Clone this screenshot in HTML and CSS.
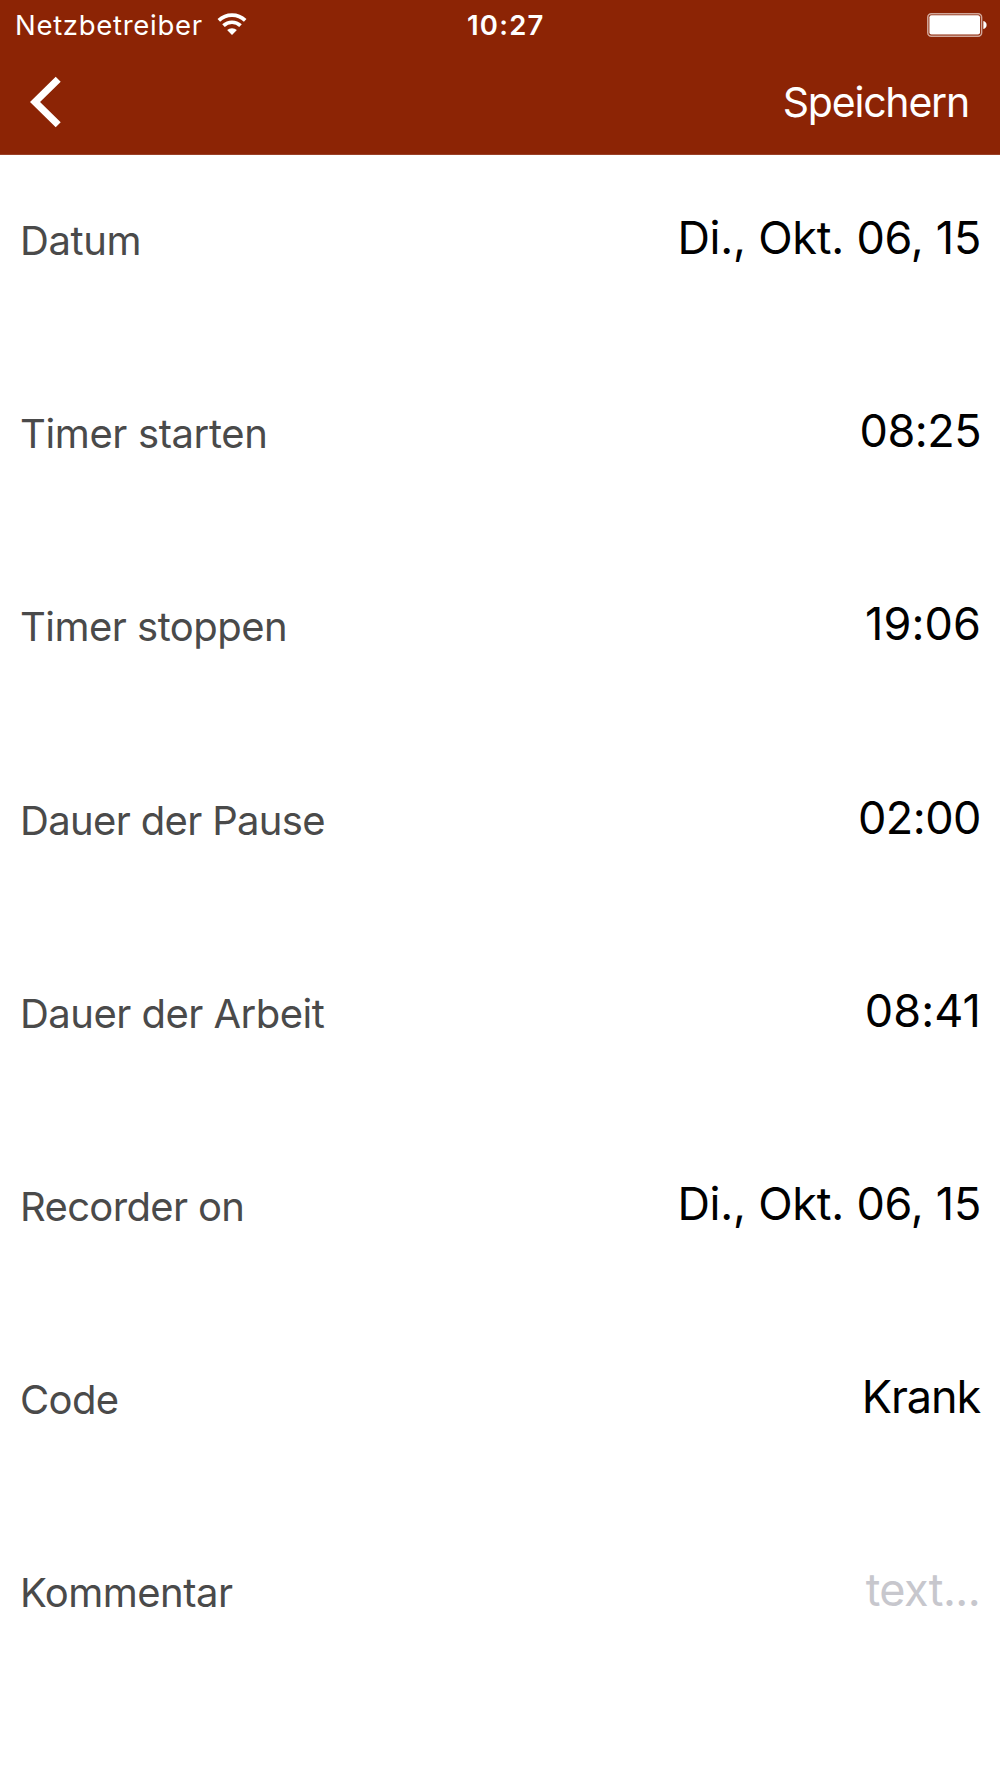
FILE: index.html
```html
<!DOCTYPE html>
<html lang="de">
<head>
<meta charset="utf-8">
<title>Speichern</title>
<link rel="stylesheet" href="styles.css">
</head>
<body>
<header class="header">
  <div class="status">
    <div class="carrier"><span class="carrier-name">Netzbetreiber</span>
      <svg class="wifi" width="30" height="23" viewBox="0 0 30 23"><g fill="none" stroke="#fff" stroke-width="3.7"><path d="M1.8 7.4a19.2 19.2 0 0 1 26.4 0"/><path d="M6.5 12.7a12.2 12.2 0 0 1 17 0"/></g><path d="M15 22l-4.9-4.9a7.2 7.2 0 0 1 9.8 0z" fill="#fff"/></svg>
    </div>
    <div class="clock">10:27</div>
    <svg class="battery" width="60" height="24" viewBox="0 0 60 24"><rect x="0.8" y="0.8" width="53.8" height="22.4" rx="3.5" fill="none" stroke="#fff" stroke-opacity="0.6" stroke-width="1.5"/><rect x="2.4" y="2.2" width="50.6" height="19.4" rx="2" fill="#fff"/><path d="M56.3 8q3.3 0.8 3.3 4t-3.3 4z" fill="#fff"/></svg>
  </div>
  <nav class="nav">
    <svg class="back" width="32" height="52" viewBox="0 0 32 52"><path d="M28.2 3.2L5 26l23.2 22.8" fill="none" stroke="#fff" stroke-width="7.1"/></svg>
    <span class="save">Speichern</span>
  </nav>
</header>
<main class="form">
  <div class="row"><span class="label wide">Datum</span><span class="value">Di., Okt. 06, 15</span></div>
  <div class="row"><span class="label wide">Timer starten</span><span class="value digits">08:25</span></div>
  <div class="row"><span class="label">Timer stoppen</span><span class="value loose">19:06</span></div>
  <div class="row"><span class="label tight">Dauer der Pause</span><span class="value digits">02:00</span></div>
  <div class="row"><span class="label">Dauer der Arbeit</span><span class="value loose">08:41</span></div>
  <div class="row"><span class="label tight">Recorder on</span><span class="value">Di., Okt. 06, 15</span></div>
  <div class="row"><span class="label tight">Code</span><span class="value word">Krank</span></div>
  <div class="row"><span class="label">Kommentar</span><span class="value placeholder">text...</span></div>
</main>
</body>
</html>
```
FILE: styles.css
```css
body { margin: 0; background: #fff; font-family: Inter, "Liberation Sans", sans-serif; }
.header { box-sizing: border-box; height: 155px; background: #8c2405; color: #fff; border-bottom: 1px solid #9b4027; }
.status { height: 50px; display: grid; grid-template-columns: 452px auto 1fr; align-items: center; padding: 0 13.5px 0 15px; font-size: 27.5px; }
.carrier { display: flex; align-items: center; gap: 14px; }
.carrier-name { letter-spacing: 0.7px; }
.wifi { margin-bottom: 2px; }
.clock { font-weight: 600; letter-spacing: 1.2px; }
.battery { justify-self: end; }
.nav { height: 103px; display: flex; justify-content: space-between; align-items: center; padding: 0 31px 0 29.5px; font-size: 41px; }
.save { letter-spacing: -1.2px; }
.form { padding-top: 1px; }
.row { height: 193.2px; display: flex; justify-content: space-between; align-items: flex-start; padding: 0 19px 0 20px; white-space: nowrap; }
.label { font-size: 40px; line-height: 60px; margin-top: 55px; color: #4a4a4a; letter-spacing: -0.52px; }
.wide { letter-spacing: -0.38px; }
.tight { letter-spacing: -0.66px; }
.value { font-size: 45px; line-height: 60px; margin-top: 52px; color: #000; letter-spacing: -0.24px; }
.digits { letter-spacing: -0.5px; }
.loose { letter-spacing: 0.1px; }
.word { letter-spacing: -1.1px; margin-right: 1px; }
.placeholder { color: #c7c7cd; letter-spacing: -0.6px; margin-right: 1px; }
```
